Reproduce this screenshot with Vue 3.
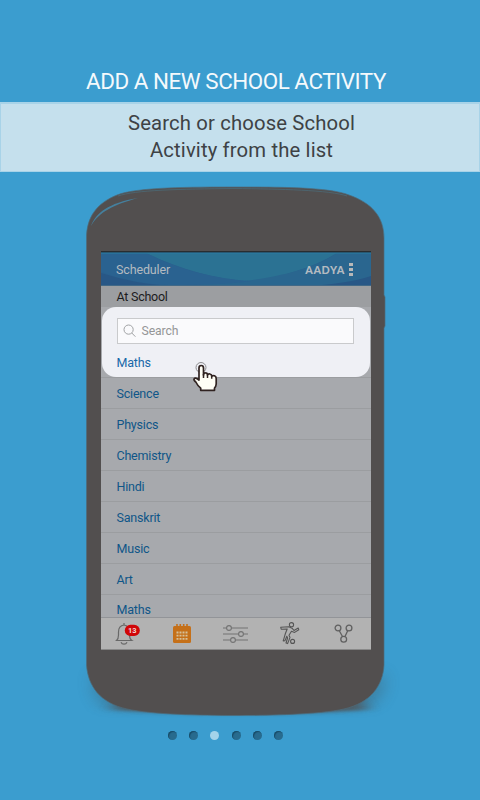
<script setup>
const subjects = ['Science', 'Physics', 'Chemistry', 'Hindi', 'Sanskrit', 'Music', 'Art', 'Maths']
const pages = [0, 1, 2, 3, 4, 5]
const activePage = 2
</script>

<template>
  <main class="tour">
    <h1 class="title">ADD A NEW SCHOOL ACTIVITY</h1>
    <div class="banner">
      <span class="line-one">Search or choose School</span>
      <span class="line-two">Activity from the list</span>
    </div>

    <section class="phone">
      <svg class="body" viewBox="0 0 360 560" width="360" height="560">
        <defs>
          <filter id="soft" x="-20%" y="-100%" width="140%" height="300%"><feGaussianBlur stdDeviation="8 1.6" /></filter>
          <filter id="wide" x="-20%" y="-50%" width="140%" height="200%"><feGaussianBlur stdDeviation="8" /></filter>
          <linearGradient id="fade" x1="0" y1="0" x2="0" y2="1"><stop offset=".82" stop-color="#fff" /><stop offset="1" stop-color="#000" /></linearGradient>
          <mask id="floor" maskUnits="userSpaceOnUse" x="0" y="480" width="360" height="62"><rect x="0" y="480" width="360" height="62" fill="url(#fade)" /></mask>
        </defs>
        <g mask="url(#floor)"><path d="M32 500 Q32 538 80 540 L275 540 Q322 538 326 500Z" fill="#40545f" opacity=".4" filter="url(#wide)" /></g>
        <path d="M62 521 Q175 538 298 521 L306 534 Q175 542 54 534Z" fill="#524f4f" opacity=".75" filter="url(#soft)" />
        <path
          d="M26.5 62 C26.5 41 37 27 57 19 C77 11 132 11 175 11 C219 11 269 11 289 19 C312 27 324 41 324 62 V119 L325 121 V150 L324 152 V489 C323 510 310 527 284 533 C260 538.5 208 539.5 175 539.5 C142 539.5 91 538.5 67 533 C40 527 28 510 26.5 489Z"
          fill="#524f4f" stroke="#4d6c7b" stroke-width=".7" />
        <path d="M31 50 C36 37 48 27 78 22 C53 29 39 36 31 50Z" fill="#45809e" />
        <path d="M58 20 C75 14 120 13 174 12.5 C220 13 270 14 287 20" fill="none" stroke="#4b6976" stroke-width=".8" />
      </svg>

      <div class="screen">
        <header class="appbar">
          <svg class="waves" viewBox="0 0 270 35" width="270" height="35" preserveAspectRatio="none">
            <rect width="270" height="35" fill="#2b608e" />
            <path d="M45 2 C78 18 110 27 150 31 C180 26 212 17 236 2Z" fill="#2b7293" />
            <path d="M100 33 C170 31 215 17 236 2 H270 V35 H100Z" fill="#2a668f" />
            <path d="M45 2 C78 18 108 27 150 30 Q125 34 68 34 Q32 33 0 21 V2Z" fill="#2a6290" />
            <path d="M0 22 Q35 33 68 35 H0Z M205 35 Q245 33 270 25 V35Z" fill="#285786" />
            <rect width="270" height="1.6" fill="#292d30" />
            <rect y="1.6" width="270" height="1" fill="#2a7ba1" />
            <rect y="34" width="270" height="1" fill="#426987" />
          </svg>
          <span class="app-name">Scheduler</span>
          <span class="brand">AADYA</span>
          <span class="more"><i></i><i></i><i></i></span>
        </header>
        <div class="section-name">At School</div>
        <div class="focus">
          <div class="search">
            <svg width="14" height="14" viewBox="0 0 14 14" fill="none" stroke="#a0a2a4" stroke-width="1">
              <circle cx="5.6" cy="5.6" r="4.6" /><path d="M8.8 9 L12.4 12.7" />
            </svg>
            <span>Search</span>
          </div>
          <div class="first">Maths</div>
          <svg class="hand" width="28" height="32" viewBox="0 0 28 32">
            <circle cx="10" cy="7.5" r="5" fill="none" stroke="#8d8d90" stroke-width="1" />
            <path d="M8 20 V8 Q8 5.5 10.2 5.5 Q12.5 5.5 12.5 8 V15 Q12.5 12.7 14.5 12.9 Q16.5 13 16.5 15 Q17 13.6 19 14 Q20.7 14.3 20.7 16.2 Q21.5 15.2 23.5 15.8 Q25.2 16.5 25.2 18.5 V24 Q25 26.5 23.5 28 V30.3 H9.7 V28.2 Q6.5 25.5 4.8 22 Q2.3 20 3.2 18.8 Q4.5 17.2 8 20Z" fill="#fffff6" stroke="#302321" stroke-width="1.7" stroke-linejoin="round" />
            <path d="M12.5 14 V18 M16.5 14.7 V18 M20.7 16 V18.8" stroke="#302321" stroke-width="1.5" />
          </svg>
        </div>
        <ul class="rows">
          <li v-for="(name, i) in subjects" :key="i">{{ name }}</li>
        </ul>
        <nav class="tabs">
          <svg class="bell" width="26" height="24" viewBox="0 0 26 24" fill="none" stroke="#686868" stroke-width="1.2">
            <path d="M1.5 18.5 Q3.5 17 3.5 13 V10 Q3.5 3.8 9 3 Q14.5 3.8 14.5 10 V13 Q14.5 17 16.8 18.5Z M9 3 V1 M6 20.3 Q6.8 22.2 9 22.2 Q11.2 22.2 12 20.3" />
            <rect x="9.8" y="2.8" width="15" height="11.2" rx="5.6" fill="#d00507" stroke="none" />
            <text x="17.2" y="11.2" text-anchor="middle" class="count">13</text>
          </svg>
          <svg class="calendar" width="18" height="19" viewBox="0 0 18 19">
            <rect y="2" width="18" height="17" rx="1.5" fill="#c57019" />
            <path d="M4 0V4M7.3 0V4M10.7 0V4M14 0V4" stroke="#c57019" stroke-width="1.6" />
            <path d="M3.5 8.5H14.5M3.5 11.7H14.5M3.5 14.9H14.5" stroke="#d5c09a" stroke-width="1.8" stroke-dasharray="2 1" />
          </svg>
          <svg class="sliders" width="26" height="20" viewBox="0 0 26 20" fill="#b2b2b2" stroke="#737373" stroke-width="1.1">
            <path d="M0 4H25M0 10H25M0 16H25" /><circle cx="6" cy="4" r="2.4" /><circle cx="18" cy="10" r="2.4" /><circle cx="10" cy="16" r="2.4" />
          </svg>
          <svg class="player" width="20" height="23" viewBox="0 0 20 23" fill="none" stroke="#555" stroke-width="1.1" stroke-linejoin="round">
            <circle cx="11.5" cy="2.7" r="2.1" />
            <path d="M.7 5.2 L8.8 4.8 L12 6.2 L14 8.5 L18.2 6 L18.8 7.8 L14.6 10.4 L11.5 9.2 L9 13.2 L10 15.4 L7.6 21.6 L6 21 L7.6 16 L6.8 14.3 L5 18.6 L3.2 19 L4 16.3 L5.4 11.5 L7.2 7 L1.2 7.2Z" />
            <circle cx="12.6" cy="19.4" r="2" />
          </svg>
          <svg class="nodes" width="20" height="20" viewBox="0 0 20 20" fill="none" stroke="#606060" stroke-width="1.3">
            <circle cx="4" cy="4" r="2.9" /><circle cx="15" cy="4" r="2.9" /><circle cx="9.7" cy="15.2" r="2.9" /><path d="M5.3 6.7L8.5 12.5M13.7 6.7L11 12.5" />
          </svg>
        </nav>
      </div>
    </section>

    <div class="dots">
      <span v-for="p in pages" :key="p" class="dot" :class="{ active: p === activePage }"></span>
    </div>
  </main>
</template>

<style>
body { background: #3b9dcf; }
</style>

<style scoped>
* { box-sizing: border-box; }
.tour {
  width: 480px;
  height: 800px;
  overflow: hidden;
  background: #3b9dcf;
  font-family: Roboto, "Liberation Sans", sans-serif;
  display: flex;
  flex-direction: column;
  align-items: center;
}
.title {
  margin: 0;
  height: 102px;
  padding-top: 66px;
  padding-right: 8px;
  font-size: 22.4px;
  letter-spacing: -.46px;
  line-height: 30px;
  font-weight: 400;
  color: #f4f9fc;
  white-space: nowrap;
}
.banner {
  width: 480px;
  height: 70px;
  padding-top: 6px;
  border: 1px solid #a8d3e8;
  border-top-width: 2px;
  background: #c5e0ed;
  color: #3e4245;
  font-size: 20.3px;
  line-height: 27px;
  display: flex;
  flex-direction: column;
  align-items: center;
}
.line-one, .line-two {
  padding-left: 3px;
  letter-spacing: .14px;
  white-space: nowrap;
}
.phone {
  width: 480px;
  height: 556px;
  padding: 79px 0 0 101px;
  position: relative;
}
.body { position: absolute; left: 60px; top: 4px; }
.screen {
  position: relative;
  width: 270px;
  height: 399px;
  display: flex;
  flex-direction: column;
  background: #a7a9ad;
}
.appbar {
  position: relative;
  height: 35px;
  flex: none;
  display: flex;
  align-items: center;
  padding: 2px 18px 0 15px;
  color: #b4bbc1;
}
.waves { position: absolute; inset: 0; }
.app-name { position: relative; font-size: 12.5px; letter-spacing: -.15px; flex: 1; }
.brand { position: relative; font: 900 10.8px Lato, sans-serif; letter-spacing: .6px; }
.more { position: relative; display: grid; gap: 2px; margin-left: 4px; }
.more i { width: 4px; height: 3px; background: #b8b8b8; }
.section-name {
  height: 21px;
  flex: none;
  padding-left: 15.5px;
  font-size: 12.5px;
  letter-spacing: -.25px;
  line-height: 21px;
  color: #1c1c1d;
  background: #9c9ea1;
}
.focus {
  position: relative;
  height: 70px;
  flex: none;
  margin: 0 1px;
  padding: 11px 16px 0 14.5px;
  background: #eff0f5;
  border-radius: 14px;
}
.search {
  height: 26px;
  border: 1px solid #c9cacc;
  background: #fafafc;
  padding-left: 5px;
  display: flex;
  align-items: center;
  gap: 5px;
  font-size: 12.2px;
  letter-spacing: -.1px;
  color: #959697;
}
.first { font-size: 12.5px; letter-spacing: -.2px; line-height: 18px; margin-top: 10px; color: #1868a8; }
.hand { position: absolute; left: 89px; top: 53px; z-index: 2; }
.rows {
  list-style: none;
  margin: 0;
  padding: 0;
  height: 240px;
  overflow: hidden;
  flex: none;
}
.rows li {
  height: 31px;
  padding-left: 15.5px;
  border-top: 1px solid #9b9da0;
  font-size: 12.5px;
  letter-spacing: -.2px;
  line-height: 31px;
  color: #0f5688;
}
.rows li:last-child { line-height: 30px; }
.tabs {
  flex: 1;
  border-top: 1px solid #929498;
  border-bottom: 1px solid #898989;
  background: #b2b2b2;
  display: flex;
  align-items: center;
  padding-left: 14px;
}
.tabs svg { flex: none; }
.count { font: 700 7.5px Roboto, sans-serif; fill: #f1d4d4; stroke: none; }
.calendar { margin-left: 31.5px; }
.sliders { margin-left: 32px; }
.player { margin-left: 31px; }
.nodes { margin-left: 34.5px; }
.dots {
  margin-top: 3px;
  width: 116px;
  display: flex;
  justify-content: space-between;
  margin-right: 29px;
}
.dot {
  width: 9px;
  height: 9px;
  border-radius: 50%;
  background: #286b8e;
  box-shadow: inset 1px 1px 1px #174c69;
}
.dot.active { background: #a3d3ea; box-shadow: none; }
</style>
